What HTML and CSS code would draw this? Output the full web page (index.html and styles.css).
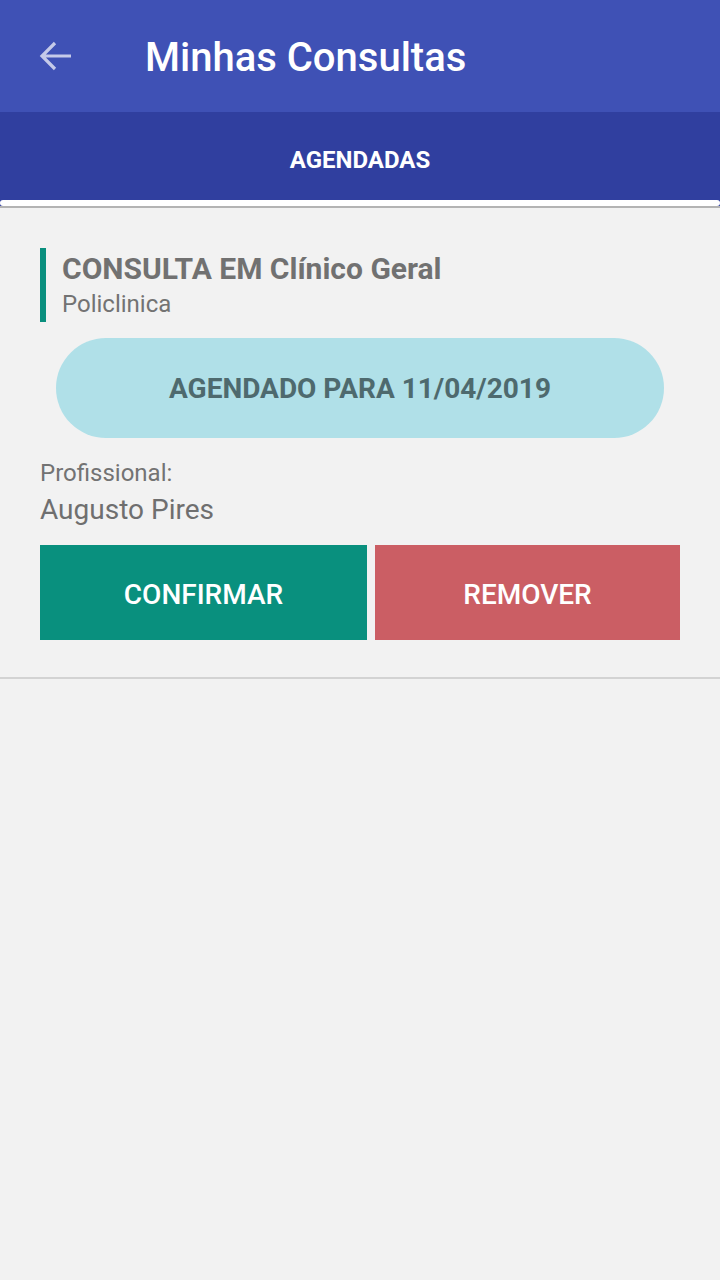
FILE: index.html
```html
<!DOCTYPE html>
<html lang="pt">
<head>
<meta charset="utf-8">
<link rel="stylesheet" href="styles.css">
</head>
<body>
<header class="appbar">
  <svg class="back" viewBox="0 0 48 48" width="48" height="48">
    <path d="M39 24H10M23 11L10 24l13 13" fill="none" stroke="#c5cae9" stroke-width="3.2"/>
  </svg>
  <h1 class="title">Minhas Consultas</h1>
</header>
<nav class="tabs">
  <div class="tab">AGENDADAS</div>
  <div class="indicator"></div>
</nav>
<main class="list">
  <section class="card">
    <div class="head">
      <div class="name">CONSULTA EM Clínico Geral</div>
      <div class="place">Policlinica</div>
    </div>
    <div class="pill">AGENDADO PARA 11/04/2019</div>
    <div class="label">Profissional:</div>
    <div class="prof">Augusto Pires</div>
    <div class="actions">
      <button class="btn confirm">CONFIRMAR</button>
      <button class="btn remove">REMOVER</button>
    </div>
  </section>
</main>
</body>
</html>
```
FILE: styles.css
```css
* { box-sizing: border-box; }
html, body { margin: 0; padding: 0; }
body {
  width: 720px;
  height: 1280px;
  background: #f2f2f2;
  font-family: Roboto, "Noto Sans", sans-serif;
  overflow: hidden;
}
.appbar {
  height: 112px;
  background: #3f51b5;
  display: flex;
  align-items: center;
  padding-left: 32px;
}
.back { display: block; }
.title {
  margin: 0 0 0 65px;
  color: #fff;
  font-size: 40px;
  font-weight: 500;
  line-height: 1;
  padding-top: 4px;
}
.tabs {
  height: 96px;
  background: #303f9f;
  display: flex;
  flex-direction: column;
  border-bottom: 2px solid #b3b3b3;
}
.tab {
  flex: 1;
  display: flex;
  align-items: center;
  justify-content: center;
  color: #fff;
  font-size: 24px;
  font-weight: 700;
  padding-top: 8px;
}
.indicator {
  height: 6px;
  background: #fff;
  border-radius: 3px;
}
.card {
  padding: 40px 40px 37px 40px;
  border-bottom: 2px solid #d3d3d3;
}
.head {
  border-left: 6px solid #0a8f7e;
  padding-left: 16px;
  height: 74px;
  display: flex;
  flex-direction: column;
  justify-content: center;
}
.name {
  font-size: 30px;
  font-weight: 700;
  color: #717171;
  line-height: 38px;
}
.place {
  font-size: 24px;
  color: #737373;
  line-height: 32px;
}
.pill {
  margin: 16px 16px 0 16px;
  height: 100px;
  border-radius: 50px;
  background: #b0e0e8;
  color: #4e6a6e;
  font-size: 28px;
  font-weight: 700;
  display: flex;
  align-items: center;
  justify-content: center;
}
.label {
  margin-top: 20px;
  font-size: 24px;
  color: #737373;
  line-height: 30px;
}
.prof {
  font-size: 28px;
  color: #6f6f6f;
  line-height: 36px;
  margin-top: 4px;
}
.actions {
  display: flex;
  gap: 8px;
  margin-top: 17px;
}
.btn {
  height: 95px;
  border: 0;
  color: #fff;
  font-family: Roboto, "Noto Sans", sans-serif;
  font-size: 28px;
  font-weight: 500;
  padding: 3px 0 0 0;
}
.confirm { flex: 0 0 327px; background: #09907e; }
.remove { flex: 0 0 305px; background: #cb5e64; }
```
